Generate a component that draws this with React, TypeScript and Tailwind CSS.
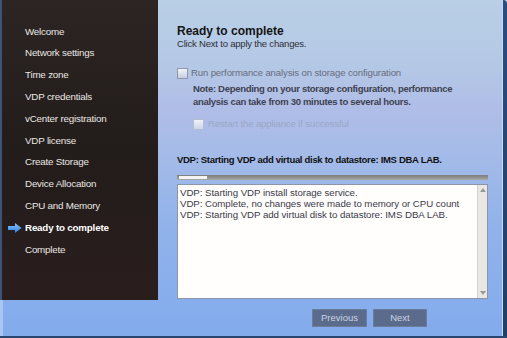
import React from "react";

const steps = [
  "Welcome",
  "Network settings",
  "Time zone",
  "VDP credentials",
  "vCenter registration",
  "VDP license",
  "Create Storage",
  "Device Allocation",
  "CPU and Memory",
  "Ready to complete",
  "Complete",
];

function Arrow() {
  return (
    <svg width="14" height="10" viewBox="0 0 14 10" className="block">
      <defs>
        <linearGradient id="ag" x1="0" y1="0" x2="0" y2="1">
          <stop offset="0" stopColor="#8cc4ff" />
          <stop offset="1" stopColor="#2a7ee0" />
        </linearGradient>
      </defs>
      <path d="M0 3 H7 V0 L13.5 5 L7 10 V7 H0 Z" fill="url(#ag)" />
    </svg>
  );
}

function Checkbox({ faded }: { faded?: boolean }) {
  return (
    <div
      className={
        faded
          ? "w-[11px] h-[11px] border border-[#b4bdd2] bg-gradient-to-b from-[#eef1f8] to-[#cdd6e8]"
          : "w-[11px] h-[11px] border border-[#8e97ab] bg-gradient-to-b from-[#f2f4f8] to-[#c6cfdf]"
      }
    />
  );
}

export default function App() {
  return (
    <div
      className="w-[507px] h-[338px] overflow-hidden flex flex-col"
      style={{
        fontFamily: '"Liberation Sans", Arial, sans-serif',
        background:
          "linear-gradient(to bottom, #b9cfe5 0%, #b4c8e6 20%, #b0bde7 32%, #a5bbe8 45%, #92b3ea 65%, #82abed 100%)",
      }}
    >
      <div className="flex flex-1 min-h-0">
        {/* sidebar column */}
        <div className="w-[158px] flex flex-col">
          <div className="h-[300px] bg-gradient-to-b from-[#2c2523] via-[#221c1b] to-[#2a1e1d] border-l-2 border-[#3d5476] pt-[21px]">
            {steps.map((s) => {
              const active = s === "Ready to complete";
              return (
                <div key={s} className="h-[21.8px] flex items-center">
                  <div className="w-[23px] flex justify-end pr-[3px]">
                    {active ? <Arrow /> : null}
                  </div>
                  <span
                    className={
                      active
                        ? "text-[9.8px] font-bold text-white tracking-[-0.2px]"
                        : "text-[9.8px] text-[#ebe7e3] tracking-[-0.2px]"
                    }
                  >
                    {s}
                  </span>
                </div>
              );
            })}
          </div>
          <div className="flex-1 border-l-[3px] border-[#a9c6f2]" />
        </div>

        {/* content column */}
        <div className="flex-1 pl-[19px] pr-[9px] flex flex-col">
          <div className="pt-[24px] text-[12px] leading-[14px] font-bold text-[#141414]">
            Ready to complete
          </div>
          <div className="text-[9.5px] leading-[12px] text-[#2e2e36] tracking-[-0.2px]">
            Click Next to apply the changes.
          </div>
          <div className="mt-[16px] h-[14px] flex items-center gap-[3px]">
            <Checkbox />
            <span className="text-[9.5px] text-[#666b7c] tracking-[-0.1px]">
              Run performance analysis on storage configuration
            </span>
          </div>
          <div className="mt-[2px] pl-[16px] text-[9.5px] leading-[13px] font-bold text-[#3e4150] tracking-[-0.3px]">
            <div>Note: Depending on your storage configuration, performance</div>
            <div>analysis can take from 30 minutes to several hours.</div>
          </div>
          <div className="mt-[9px] pl-[16px] h-[14px] flex items-center gap-[4px]">
            <Checkbox faded />
            <span className="text-[9.5px] text-[#9ba6c4] tracking-[-0.1px]">
              Restart the appliance if successful
            </span>
          </div>
          <div className="mt-[22px] text-[9.5px] leading-[14px] font-bold text-[#101010] tracking-[-0.3px]">
            VDP: Starting VDP add virtual disk to datastore: IMS DBA LAB.
          </div>
          <div className="mt-[8px] w-[311px] h-[5px] bg-gradient-to-b from-[#7d7d7d] to-[#a8a8a8] flex items-center px-[2px]">
            <div className="w-[28px] h-[3px] bg-[#f4f4f4]" />
          </div>
          <div className="mt-[4px] w-[311px] h-[115px] border border-[#8d95a6] bg-[#fffefc] flex">
            <div className="flex-1 pl-[2px] pt-[2px] text-[9.7px] leading-[11px] text-[#3a3a4a] tracking-[-0.05px]">
              <div>VDP: Starting VDP install storage service.</div>
              <div>VDP: Complete, no changes were made to memory or CPU count</div>
              <div>VDP: Starting VDP add virtual disk to datastore: IMS DBA LAB.</div>
            </div>
            <div className="w-[10px] bg-[#e9e7e3] border-l border-[#d7d4cf] flex flex-col justify-between items-center py-[3px]">
              <svg width="6" height="4" viewBox="0 0 6 4">
                <path d="M0 4 L3 0 L6 4 Z" fill="#9a9a9a" />
              </svg>
              <svg width="6" height="4" viewBox="0 0 6 4">
                <path d="M0 0 L3 4 L6 0 Z" fill="#9a9a9a" />
              </svg>
            </div>
          </div>
          <div className="mt-[10px] pl-[135px] flex gap-[6px]">
            <div className="w-[55px] h-[18px] bg-[#5b6b8b] border border-[#6d7c9a] flex items-center justify-center text-[9.5px] text-[#c9d3e6]">
              Previous
            </div>
            <div className="w-[54px] h-[18px] bg-[#5b6b8b] border border-[#6d7c9a] flex items-center justify-center text-[9.5px] text-[#c9d3e6]">
              Next
            </div>
          </div>
        </div>

        {/* right window border */}
        <div className="w-[5px] border-l border-[#c9dcf4] bg-gradient-to-b from-[#2b4d7d] to-[#1f3e6c] rounded-tr-[4px]" />
      </div>
      <div className="h-[2px] bg-[#28466f]" />
    </div>
  );
}
